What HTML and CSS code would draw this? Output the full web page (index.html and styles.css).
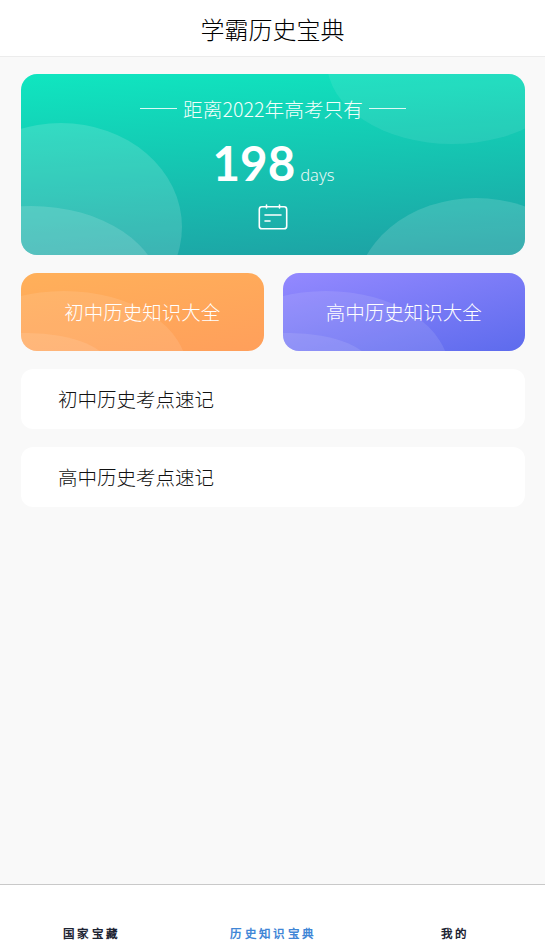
FILE: index.html
```html
<!DOCTYPE html>
<html lang="zh-CN">
<head>
<meta charset="utf-8">
<title>学霸历史宝典</title>
<link rel="stylesheet" href="styles.css">
</head>
<body>
<div class="app">
  <header class="topbar">学霸历史宝典</header>
  <main class="content">
    <section class="count-card">
      <i class="blob blob-a"></i><i class="blob blob-b"></i><i class="blob blob-c"></i><i class="blob blob-d"></i>
      <div class="count-label"><span class="rule"></span><span>距离2022年高考只有</span><span class="rule"></span></div>
      <div class="count-value"><span class="num">198</span><span class="unit">days</span></div>
      <svg class="cal" width="30" height="26" viewBox="0 0 30 26" fill="none" stroke="#fff" stroke-width="1.6" stroke-linecap="round">
        <rect x="1.3" y="2.8" width="27.4" height="22" rx="2.6"/>
        <path d="M8.5 1v3M21.5 1v3M7 11h16M7 17h5"/>
      </svg>
    </section>
    <section class="btn-row">
      <div class="big-btn orange"><i class="blob blob-e"></i><i class="blob blob-f"></i><span class="btn-text">初中历史知识大全</span></div>
      <div class="big-btn purple"><i class="blob blob-e"></i><i class="blob blob-f"></i><span class="btn-text">高中历史知识大全</span></div>
    </section>
    <div class="list-item">初中历史考点速记</div>
    <div class="list-item">高中历史考点速记</div>
  </main>
  <nav class="tabbar">
    <span class="tab">国家宝藏</span>
    <span class="tab active">历史知识宝典</span>
    <span class="tab">我的</span>
  </nav>
</div>
</body>
</html>
```

FILE: styles.css
```css
* { box-sizing: border-box; }
html, body { margin: 0; padding: 0; }
body { background: #f9f9f9; font-family: "Noto Sans CJK SC", "Noto Sans", sans-serif; font-weight: 300; }
.app { width: 545px; height: 943px; display: flex; flex-direction: column; overflow: hidden; }
.topbar { height: 57px; flex: none; background: #fff; border-bottom: 1px solid #ececec; display: flex; align-items: center; justify-content: center; font-size: 24px; line-height: 1; color: #000; padding-top: 2px; }
.content { flex: 1; padding: 17px 20px 0 21px; display: flex; flex-direction: column; }
.count-card { position: relative; overflow: hidden; height: 181px; border-radius: 16px; background: linear-gradient(176deg, #10e6c0 0%, #14cbb4 40%, #1ea0a4 100%); display: flex; flex-direction: column; align-items: center; color: #fff; }
.blob { position: absolute; display: block; border-radius: 50%; background: rgba(255,255,255,.14); }
.blob-a { left: -81px; top: 49px; width: 242px; height: 208px; }
.blob-b { left: -120px; top: 132px; width: 260px; height: 174px; }
.blob-c { left: 306px; top: -94px; width: 250px; height: 164px; background: rgba(255,255,255,.08); }
.blob-d { left: 334px; top: 124px; width: 242px; height: 200px; }
.count-label { position: relative; display: flex; align-items: center; gap: 6px; margin-top: 21px; height: 26px; font-size: 19.7px; color: #f2fffb; }
.rule { width: 37px; height: 1px; background: rgba(255,255,255,.85); }
.count-value { position: relative; display: flex; align-items: baseline; gap: 5px; margin-top: 12px; height: 60px; font-family: Lato, sans-serif; margin-left: 1px; }
.num { font-size: 47.5px; font-weight: 700; line-height: 60px; }
.unit { font-family: "Noto Sans", sans-serif; font-size: 16.5px; font-weight: 300; opacity: .9; }
.cal { position: relative; margin-top: 11px; }
.btn-row { display: flex; justify-content: space-between; margin-top: 18px; }
.big-btn { position: relative; overflow: hidden; width: 242.5px; height: 78px; border-radius: 16px; display: flex; align-items: center; justify-content: center; color: #fff; font-size: 19.5px; padding-bottom: 2px; }
.orange { background: linear-gradient(170deg, #ffb05a, #ff9f5b); }
.purple { background: linear-gradient(165deg, #9489ff, #5d6bed); }
.blob-e { left: -80px; top: 18px; width: 246px; height: 160px; background: rgba(255,255,255,.1); }
.blob-f { left: -75px; top: 60px; width: 164px; height: 70px; background: rgba(255,255,255,.1); }
.btn-text { position: relative; }
.list-item { height: 60px; margin-top: 18px; background: #fff; border-radius: 12px; display: flex; align-items: center; padding-left: 37px; padding-bottom: 2px; font-size: 19.5px; color: #111; }
.tabbar { height: 59px; flex: none; background: #fff; border-top: 1px solid #c9c9c9; display: grid; grid-template-columns: repeat(3, 1fr); align-items: end; justify-items: center; padding-bottom: 1px; }
.tab { font-family: serif; font-size: 11.5px; font-weight: 700; letter-spacing: 3.4px; line-height: 16px; color: #1d2433; margin-right: -2px; }
.active { color: #3f86d6; }
```
